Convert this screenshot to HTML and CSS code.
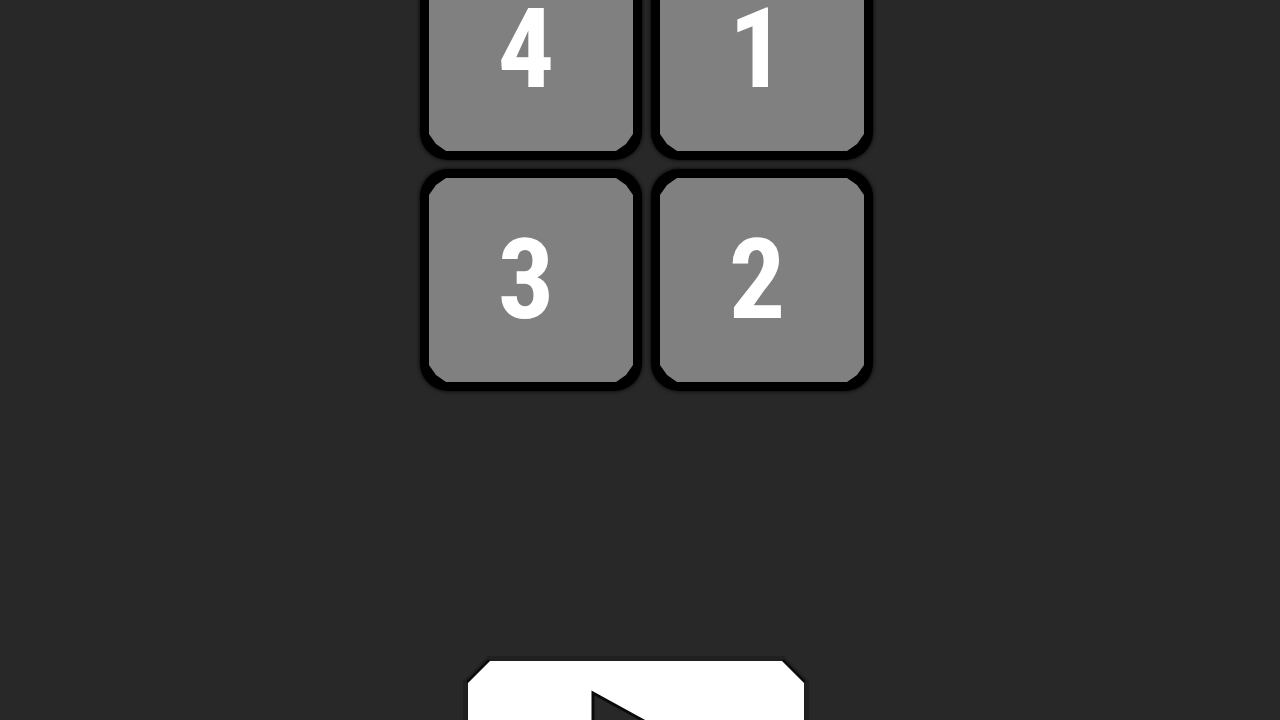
FILE: index.html
```
<!DOCTYPE html>
<html lang="en">
<head>
<meta charset="utf-8">
<meta name="viewport" content="width=device-width, initial-scale=1">
<title>Number tiles</title>
<link rel="stylesheet" href="styles.css">
</head>
<body>
<main class="game">
  <div class="board">
    <button class="tile" type="button"><span class="face">4</span></button>
    <button class="tile" type="button"><span class="face">1</span></button>
    <button class="tile" type="button"><span class="face">3</span></button>
    <button class="tile" type="button"><span class="face">2</span></button>
  </div>
  <button class="play" type="button" aria-label="Play">
    <svg class="play-art" viewBox="0 0 350 240" aria-hidden="true">
      <path d="M29 7H321L343 29V211L321 233H29L7 211V29Z" fill="#fff" stroke="#202020" stroke-width="10"/>
      <path d="M29 7L7 29M321 7L343 29" stroke="#090909" stroke-width="5"/>
      <path d="M29 7H321L343 29V211L321 233H29L7 211V29Z" fill="#fff"/>
      <path d="M132 39L252 105L132 171Z" fill="#282828" stroke="#0a0a0a" stroke-width="3"/>
    </svg>
  </button>
</main>
</body>
</html>
```
FILE: styles.css
```
* {
  box-sizing: border-box;
}

html {
  overflow: hidden;
}

body {
  margin: 0;
  background: #282828;
  font-family: "Roboto Condensed", Roboto, "Liberation Sans", sans-serif;
}

.game {
  display: flex;
  flex-direction: column;
  align-items: center;
  gap: 263px;
  margin-top: -62px;
}

.board {
  display: grid;
  grid-template-columns: repeat(2, 222px);
  grid-auto-rows: 222px;
  gap: 9px;
  margin-left: 13px;
}

.tile {
  display: grid;
  padding: 9px;
  border: 0;
  border-radius: 28px;
  background: #000;
  box-shadow: 0 0 4px #000;
  font: inherit;
  cursor: pointer;
}

.face {
  display: grid;
  place-items: center;
  padding-right: 10px;
  background: #808080;
  color: #fff;
  font-size: 112px;
  font-weight: 700;
  line-height: 1;
  clip-path: polygon(17px 0, calc(100% - 17px) 0, calc(100% - 7px) 7px, 100% 17px, 100% calc(100% - 17px), calc(100% - 7px) calc(100% - 7px), calc(100% - 17px) 100%, 17px 100%, 7px calc(100% - 7px), 0 calc(100% - 17px), 0 17px, 7px 7px);
}

.play {
  width: 350px;
  margin-right: 9px;
  padding: 0;
  border: 0;
  background: none;
  cursor: pointer;
}

.play-art {
  display: block;
  width: 100%;
}
```
